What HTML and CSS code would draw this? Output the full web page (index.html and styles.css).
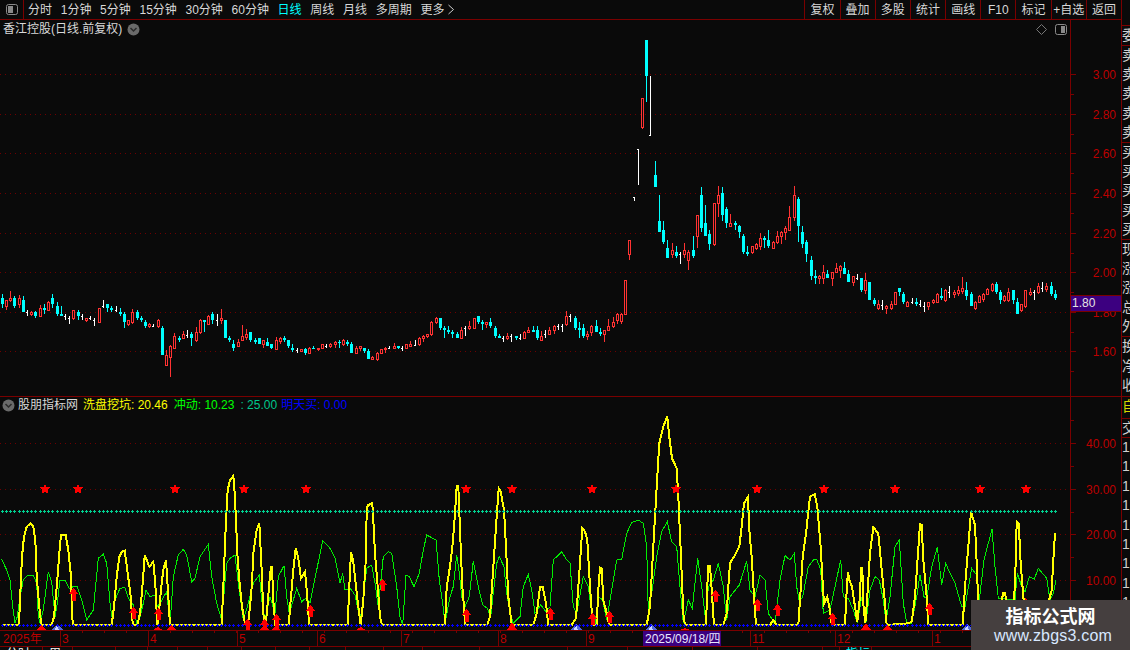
FILE: index.html
```html
<!DOCTYPE html>
<html lang="zh">
<head>
<meta charset="utf-8">
<title>香江控股</title>
<link rel="stylesheet" href="styles.css">
</head>
<body>
<div class="app">
  <div class="main">
    <div class="toolbar">
      <div class="tool-left">
        <div class="panel-btn">
          <svg class="panel-icon" width="14" height="13" viewBox="0 0 14 13"><rect class="pi-frame" x="1.5" y="1.5" width="11" height="10" rx="2"/><rect class="pi-fill" x="3" y="3" width="5" height="7"/></svg>
        </div>
        <div class="periods">
          <span>分时</span><span>1分钟</span><span>5分钟</span><span>15分钟</span><span>30分钟</span><span>60分钟</span><span class="active">日线</span><span>周线</span><span>月线</span><span>多周期</span>
          <span class="more">更多<svg class="more-icon" width="8" height="11" viewBox="0 0 8 11"><path d="M1.5 1l5 4.5-5 4.5"/></svg></span>
        </div>
      </div>
      <div class="tool-right">
        <span>复权</span><span>叠加</span><span>多股</span><span>统计</span><span>画线</span><span>F10</span><span>标记</span><span>+自选</span><span>返回</span>
      </div>
    </div>

    <div class="pane pane-price">
      <div class="plot">
        <svg id="priceChart" class="chart" viewBox="0 20 1070 376" width="1070" height="376"></svg>
        <div class="title-row">
          <span>香江控股(日线.前复权)</span>
          <svg class="chev" width="13" height="13" viewBox="0 0 13 13"><circle class="chev-bg" cx="6.5" cy="6.5" r="6"/><path class="chev-line" d="M3.5 5l3 3 3-3"/></svg>
        </div>
        <div class="pane-tools">
          <svg width="11" height="11" viewBox="0 0 11 11"><path class="diamond" d="M5.500 0.500l5 5-5 5-5-5z"/></svg>
          <svg width="14" height="13" viewBox="0 0 14 13"><rect class="pi-frame" x="1.500" y="1.500" width="11" height="10" rx="2"/><rect class="pi-fill" x="7" y="3" width="4" height="7"/></svg>
        </div>
      </div>
      <div class="axis">
        <svg id="priceAxis" class="chart" viewBox="1071 20 50 376" width="50" height="376"></svg>
        <div class="price-tag">1.80</div>
      </div>
    </div>

    <div class="pane pane-ind">
      <div class="plot">
        <svg id="indChart" class="chart" viewBox="0 397 1070 233" width="1070" height="233"></svg>
        <div class="legend">
          <svg class="chev" width="13" height="13" viewBox="0 0 13 13"><circle class="chev-bg" cx="6.5" cy="6.5" r="6"/><path class="chev-line" d="M3.500 5l3 3 3-3"/></svg>
          <span class="lg-name">股朋指标网</span>
          <span class="lg-yellow">洗盘挖坑: 20.46</span>
          <span class="lg-green">冲动: 10.23</span>
          <span class="lg-teal">: 25.00</span>
          <span class="lg-blue">明天买: 0.00</span>
        </div>
      </div>
      <div class="axis">
        <svg id="indAxis" class="chart" viewBox="1071 397 50 233" width="50" height="233"></svg>
      </div>
    </div>

    <div class="pane pane-x">
      <div class="plot">
        <svg id="xAxis" class="chart" viewBox="0 631 1070 15" width="1070" height="15"></svg>
      </div>
      <div class="axis"></div>
    </div>

    <div class="tabs">
      <span class="t43">分时</span><span class="t30">周</span><span class="t43"></span><span class="t32"></span><span class="t30"></span><span class="t30"></span><span class="t34"></span><span class="t34"></span><span class="t34"></span><span class="t36"></span><span class="t38"></span><span class="t39"></span><span class="t57"></span><span class="t88"></span><span class="t60"></span><span class="t65"></span><span class="t65"></span><span class="t65"></span><span class="t17"></span><span class="t32 tab-on">指标</span>
    </div>
  </div>

  <div class="side">
    <div class="grp g-top"></div>
    <div class="grp g-20"><div class="row">委比</div></div>
    <div class="grp g-97"><div class="row">卖五</div><div class="row">卖四</div><div class="row">卖三</div><div class="row">卖二</div><div class="row">卖一</div></div>
    <div class="grp g-97"><div class="row">买一</div><div class="row">买二</div><div class="row">买三</div><div class="row">买四</div><div class="row">买五</div></div>
    <div class="grp g-97"><div class="row">现价</div><div class="row">涨跌</div><div class="row">涨幅</div><div class="row">总量</div><div class="row">外盘</div></div>
    <div class="grp g-60"><div class="row">换手</div><div class="row">净资</div><div class="row">收益</div></div>
    <div class="grp g-22 side-yellow"><div class="row">自选</div></div>
    <div class="grp g-19"><div class="row">交易</div></div>
    <div class="list">
      <div class="row">1</div><div class="row">1</div><div class="row">1</div><div class="row">1</div><div class="row">1</div><div class="row">1</div><div class="row">1</div><div class="row">1</div><div class="row">1</div><div class="row">1</div><div class="row">1</div>
    </div>
  </div>

  <div class="watermark">
    <div class="wm-title">指标公式网</div>
    <div class="wm-url">www.zbgs3.com</div>
  </div>
</div>
<script src="chart.js"></script>
</body>
</html>
```

FILE: styles.css
```css
* { box-sizing: border-box; }
html, body { margin: 0; padding: 0; background: #0a0a0a; overflow: hidden; }
body {
  width: 1130px;
  height: 650px;
  font: 12px/14px "Liberation Sans", "Noto Sans CJK SC", sans-serif;
  color: #d8d8d8;
}
.app { position: relative; display: flex; width: 1130px; height: 650px; overflow: hidden; }
.main { display: flex; flex-direction: column; width: 1121px; flex: none; }

/* toolbar */
.toolbar {
  display: flex;
  justify-content: space-between;
  height: 20px;
  flex: none;
  border-bottom: 1px solid #7a0000;
}
.tool-left { display: flex; align-items: stretch; }
.panel-btn {
  display: flex;
  align-items: center;
  justify-content: center;
  width: 24px;
  border-right: 1px solid #7a0000;
}
.pi-frame { fill: none; stroke: #8a8a8a; }
.pi-fill { fill: #8a8a8a; }
.periods { display: flex; align-items: center; gap: 8.7px; padding-left: 4px; }
.periods .active { color: #00ffff; }
.more { display: inline-flex; align-items: center; gap: 3px; }
.more-icon path { fill: none; stroke: #d0d0d0; }
.tool-right { display: flex; }
.tool-right span {
  display: flex;
  align-items: center;
  justify-content: center;
  width: 35.2px;
  border-left: 1px solid #7a0000;
  white-space: nowrap;
}

/* panes */
.pane { display: flex; flex: none; }
.pane-price { height: 377px; border-bottom: 1px solid #7a0000; }
.pane-ind { height: 234px; border-bottom: 1px solid #7a0000; }
.pane-x { height: 16px; border-bottom: 1px solid #7a0000; }
.plot { position: relative; width: 1070px; flex: none; }
.axis { position: relative; width: 51px; flex: none; border-left: 1px solid #7a0000; }
.chart { display: block; shape-rendering: crispEdges; }

.title-row {
  position: absolute;
  left: 3px;
  top: 2px;
  display: flex;
  align-items: center;
  gap: 5px;
  height: 14px;
}
.chev { flex: none; }
.chev-bg { fill: #6a6a6a; }
.chev-line { fill: none; stroke: #2a2a2a; stroke-width: 1.5; }
.pane-tools {
  position: absolute;
  right: 2px;
  top: 3px;
  display: flex;
  align-items: center;
  gap: 7px;
}
.diamond { fill: none; stroke: #777; }

.price-tag {
  position: absolute;
  left: 0;
  top: 275px;
  width: 50px;
  height: 17px;
  padding-left: 1px;
  background: #3c0080;
  border-top: 1px solid #7a0000;
  border-bottom: 1px solid #7a0000;
  color: #e4e4e4;
  line-height: 15px;
}

.legend {
  position: absolute;
  left: 2px;
  top: 1px;
  display: flex;
  align-items: center;
  height: 14px;
  white-space: nowrap;
}
.lg-name { margin-left: 3px; color: #d8d8d8; }
.lg-yellow { margin-left: 5px; color: #ffff00; }
.lg-green { margin-left: 6px; color: #00ff00; }
.lg-teal { margin-left: 6px; color: #00c88c; }
.lg-blue { margin-left: 4px; color: #0000ff; }

/* svg chart parts */
.grid { stroke: #6e0000; stroke-dasharray: 1 4; fill: none; }
.red-c { fill: none; stroke: #ff3232; }
.red-w { stroke: #ff3232; }
.cy-b { fill: #00ffff; }
.cy-w { stroke: #00ffff; }
.wh-w { stroke: #ffffff; }
.ln-yellow { fill: none; stroke: #ffff00; stroke-width: 2; }
.ln-green { fill: none; stroke: #00ee00; stroke-width: 1; }
.pl-teal { fill: none; stroke: #00d090; }
.pl-blue { fill: none; stroke: #0000ff; }
.mk-red { fill: #ff0000; }
.mk-blue { fill: #5068d8; }
.mk-tip { fill: #c8d4ff; }
.tick { stroke: #7a0000; }
.ax-t { fill: #bc0000; font: 12px "Liberation Sans", sans-serif; }
.x-t { fill: #bc0000; font: 12px "Liberation Sans", "Noto Sans CJK SC", sans-serif; }
.date-bg { fill: #3c0080; }
.date-t { fill: #e8e8ff; font: 12px "Liberation Sans", "Noto Sans CJK SC", sans-serif; }

/* bottom tabs */
.tabs { display: flex; height: 3px; overflow: hidden; flex: none; line-height: 12px; }
.tabs span { flex: none; height: 14px; padding: 1px 0 0 6px; border-right: 1px solid #7a0000; color: #fff; }
.tabs .tab-on { color: #00ffff; }
.t17 { width: 17px; }
.t30 { width: 30px; }
.t32 { width: 32px; }
.t34 { width: 34px; }
.t36 { width: 36px; }
.t38 { width: 38px; }
.t39 { width: 39px; }
.t43 { width: 43px; }
.t57 { width: 57px; }
.t60 { width: 60px; }
.t65 { width: 65px; }
.t88 { width: 88px; }

/* side column */
.side {
  width: 9px;
  flex: none;
  border-left: 1px solid #7a0000;
  overflow: hidden;
  font-size: 14px;
  color: #d0d0d0;
}
.grp { display: flex; flex-direction: column; border-bottom: 1px solid #7a0000; }
.row { flex: 1; width: 40px; white-space: nowrap; line-height: 19px; }
.g-top { height: 26px; }
.g-20 { height: 20px; }
.g-97 { height: 97px; }
.g-60 { height: 60px; }
.g-22 { height: 22px; }
.g-19 { height: 19px; }
.side-yellow { color: #d8d800; }
.list .row { height: 19.4px; flex: none; }

/* watermark */
.watermark {
  position: absolute;
  left: 971px;
  top: 600px;
  width: 159px;
  height: 50px;
  background: #453f3f;
  text-align: center;
}
.wm-title { margin-top: 5px; color: #fff; font: bold 18px/20px "Noto Sans CJK SC", sans-serif; }
.wm-url { margin-top: 1px; padding-left: 5px; color: #d8e8ff; font: 16px/20px "Liberation Sans", sans-serif; letter-spacing: .2px; }
```

FILE: chart.js
```js
// Daily bars: type, high, body top, body bottom, low (pixel rows of the price pane).
var BARS = "c294 298 304 308,r300 300 307 310,r291 298 301 302,c296 298 306 308,r295 298 305 308,c296 300 312 312,w310 312 312 316,r311 312 315 316,c311 312 316 318,r305 308 317 317,c304 308 310 314,r301 302 311 311,c294 298 304 308,c302 306 314 316,c306 314 316 316,w314 316 316 320,w316 318 318 324,r310 310 319 320,c310 312 316 320,w314 316 316 320,r318 318 321 322,w316 318 318 320,w318 320 320 326,r308 308 323 323,w300 306 306 308,c304 304 308 312,c306 308 310 312,w306 310 310 312,c308 312 314 316,c312 314 322 328,r320 320 325 326,r309 312 323 324,c310 312 318 320,c316 318 320 322,c320 322 326 328,r323 324 327 328,w324 326 326 327,r319 320 327 328,c326 328 355 355,r350 355 366 366,r345 346 358 377,r333 336 349 349,c336 338 340 342,r331 334 339 339,w330 335 335 338,c332 334 338 346,r327 332 341 342,r319 320 333 334,c320 320 322 332,r315 316 325 325,c312 314 320 324,w314 320 320 326,r309 318 321 324,c320 320 338 338,c336 338 340 342,c340 344 348 351,r339 342 347 347,r325 336 341 341,r329 334 338 340,c332 332 340 342,c338 340 342 344,c338 338 344 344,r340 340 345 348,c338 342 346 346,c344 344 348 349,r337 340 350 350,r337 338 342 344,c336 338 340 342,c340 340 346 348,c344 348 350 352,w348 350 350 353,r349 349 352 352,c348 349 353 355,r347 348 354 354,c346 348 349 349,r348 348 350 351,"
+ "r344 344 349 349,w344 346 346 348,r343 344 347 348,r341 342 345 348,c340 342 343 348,r339 340 345 346,c340 342 344 346,c342 344 353 353,r346 348 354 354,r346 346 349 351,c348 348 351 353,c349 351 359 359,r356 357 360 360,r352 353 360 361,r349 349 354 354,r347 348 350 353,w346 348 348 349,r343 346 349 349,c346 346 348 349,w346 348 348 351,r344 344 349 349,r341 344 347 347,w340 345 345 346,r337 338 345 346,r335 336 339 342,r334 334 337 338,r321 322 335 336,r317 318 323 324,c318 318 328 330,c326 328 330 338,c326 330 332 334,c330 332 334 338,c332 334 338 338,r327 330 339 339,w326 328 328 336,r321 326 329 330,r318 318 329 329,c316 316 322 324,c320 322 324 330,r322 322 325 328,c318 322 326 328,c326 328 336 338,c334 336 338 338,w336 338 338 342,r333 336 339 340,w334 336 336 342,c336 336 338 340,w334 338 338 340,r331 332 339 339,r327 330 333 333,c326 330 332 332,c326 330 338 340,r331 336 341 341,w330 334 334 338,r327 330 335 335,r325 326 331 334,w324 326 326 330,w324 326 326 332,r311 316 325 326,w314 316 316 322,c316 318 328 330,c322 328 330 338,c324 328 336 338,r331 334 337 340,r325 326 333 336,c320 326 332 332,c328 332 334 336,r330 330 335 342,r319 326 331 331,r317 322 327 328,r313 314 321 324,"
+ "r313 314 322 324,r280 280 315 315,r240 240 255 260,w197 197 197 201,w149 149 149 185,r98 98 128 129,c40 40 76 102,w76 135 135 135,c161 175 187 187,c195 221 232 232,c221 230 242 244,c240 248 258 258,r243 250 255 258,c246 252 256 258,w252 254 254 264,r243 250 255 258,r250 252 261 270,c236 250 256 258,r215 215 237 248,c187 195 228 232,c205 223 236 236,c230 234 244 250,r203 203 245 246,r186 195 204 217,c187 193 215 221,c207 209 223 228,r214 223 227 227,c221 223 225 230,c225 226 232 238,c234 236 252 254,c246 252 254 256,r246 246 253 254,r243 244 249 250,r233 238 247 250,c236 238 240 248,c230 240 246 248,r241 242 249 249,r231 236 243 244,r231 232 237 244,r226 228 233 240,r206 217 231 231,r186 195 218 221,c197 199 226 242,c226 232 244 248,c240 242 254 262,c256 260 276 280,c270 276 278 284,r275 276 279 284,r265 272 279 284,c270 274 278 278,r272 272 279 286,r263 268 273 273,r265 266 271 278,c262 268 274 274,c270 274 282 282,r276 276 283 286,w274 278 278 280,"
+ "c278 278 290 292,r273 280 291 294,c282 282 300 300,c298 300 304 306,r300 304 309 310,w300 305 305 310,r305 306 309 314,r301 304 309 310,r292 292 305 305,c288 288 292 296,c292 294 302 304,r301 302 307 307,w298 302 302 304,c298 302 304 306,w300 304 304 307,w302 306 306 312,r302 302 307 310,r299 300 303 304,r293 294 303 303,c288 296 298 300,r289 290 301 302,w286 292 292 298,r290 292 295 298,r286 290 294 296,r277 288 292 294,c282 290 296 300,c292 294 306 306,r301 302 309 310,r295 296 303 303,r293 294 300 302,r288 289 295 295,r283 284 291 292,c282 284 292 294,c290 292 300 304,r295 296 301 302,r288 292 301 302,c290 290 300 304,c298 302 314 314,r304 304 311 312,r290 290 307 308,r288 292 295 296,w290 292 292 300,r283 286 293 294,w282 288 288 292,r283 286 290 292,c282 286 294 296,c290 294 298 300";

// Indicator lines traced in three overlapping sections: [x origin, y origin, "x,y ..." at 1/3 px].
var YELLOW = [
  [0, 520, "5,315 57,315 60,240 66,110 72,50 80,20 92,10 100,20 106,60 110,170 118,260 124,315 155,315 162,290 172,180 178,100 183,45 197,45 205,90 212,160 218,315 335,315 342,260 350,170 358,110 366,95 374,92 382,150 392,230 397,300 400,315 412,315 420,280 428,190 434,105 442,125 448,140 460,125 466,190 472,315 475,300 484,200 490,150 498,120 503,200 510,315 665,315 672,150 678,0 683,-90 690,-120 700,-132 704,-81 708,0 712,100 718,180 726,260 735,310 745,305 750,260 756,190 760,100 770,30 778,10 785,150 790,280 794,315 800,285 808,190 813,140 816,140 820,240 826,315 866,315 872,240 880,150 887,85 895,115 903,175 915,155 920,210 928,315 1043,315 1048,200 1053,97 1060,125 1068,200 1075,260 1082,315 1090,240 1098,110 1100,-36 1105,-45 1117,-51 1120,0 1125,100 1133,200 1140,290 1146,315 1200,315"],
  [400, 400, "135,675 140,560 150,500 158,430 165,340 170,257 175,257 180,390 187,560 192,620 195,675 262,675 270,650 280,500 290,350 296,265 302,275 312,330 318,440 325,590 335,675 400,675 410,640 420,560 428,560 438,610 445,675 515,675 528,655 538,520 547,385 555,395 562,420 570,560 578,675 590,675 595,570 600,503 605,505 610,600 620,640 628,675 740,675 750,620 760,440 770,260 778,130 790,80 802,50 808,110 816,175 830,205 835,290 842,450 850,640 855,675 918,675 922,560 925,497 930,497 935,570 942,675 970,675 980,640 985,560 990,490 1005,465 1018,440 1025,380 1032,310 1044,290 1048,390 1055,470 1062,590 1068,675 1110,675 1120,660 1130,675 1140,675"],
  [780, 390, "55,705 60,630 68,500 78,430 90,320 104,312 112,350 122,470 128,580 132,640 142,620 150,660 155,705 195,705 200,600 204,545 208,570 216,590 225,650 232,695 240,620 243,533 247,533 250,640 256,700 262,620 270,490 280,412 295,430 305,540 315,640 320,705 385,700 395,695 405,620 412,520 420,403 425,405 430,510 440,620 445,705 548,705 555,590 565,470 573,365 585,405 590,520 595,640 600,705 655,705 665,630 670,610 675,610 680,640 700,640 705,590 710,395 716,400 722,520 730,620 740,705 800,705 805,640 815,600 820,510 825,428"]
];
var GREEN = [
  [0, 520, "5,118 20,150 30,180 38,260 45,310 52,290 60,230 70,180 85,165 100,165 110,190 115,290 120,310 130,270 145,155 155,185 165,290 172,250 180,180 195,180 208,205 220,200 232,200 245,240 260,300 280,270 295,115 310,103 320,130 330,250 335,290 345,240 360,205 375,203 385,235 400,255 410,310 420,290 430,250 438,210 450,230 465,225 470,260 480,250 500,215 510,315 520,170 535,105 550,88 560,105 575,185 585,175 600,110 625,73 635,170 650,250 665,300 680,130 690,115 705,105 715,190 730,300 745,250 760,190 778,165 785,240 795,300 810,230 825,280 835,170 852,137 860,230 868,280 880,240 890,205 905,245 920,232 930,250 950,150 968,62 990,85 1005,115 1020,190 1028,160 1035,210 1050,205 1065,225 1080,300 1085,270 1100,145 1115,135 1125,190 1135,260 1150,110 1165,95 1175,100 1190,200"],
  [400, 400, "0,650 8,675 18,525 28,530 42,560 58,520 70,450 80,405 108,420 118,540 128,610 135,670 150,590 160,560 170,465 178,520 185,590 195,620 208,590 220,483 235,560 248,615 262,625 272,650 278,595 290,490 298,470 312,500 320,580 330,640 340,670 360,650 370,560 385,523 395,570 405,640 422,615 438,635 450,620 460,480 485,455 500,480 510,490 520,620 530,640 550,530 565,560 575,640 585,675 595,590 608,600 620,660 630,600 650,480 665,478 680,400 695,368 715,360 730,370 740,440 745,640 755,580 770,470 785,395 802,365 815,425 830,440 840,560 850,670 865,600 877,625 893,475 905,560 918,670 925,560 940,540 955,490 970,560 980,660 990,590 1018,555 1040,483 1050,570 1065,590 1080,525 1095,540 1105,640 1125,672"],
  [780, 390, "0,570 15,497 30,510 43,490 50,590 58,635 68,620 85,530 100,510 110,507 122,540 130,670 150,660 165,590 182,510 190,620 205,625 220,660 232,700 245,620 258,695 270,600 285,560 298,570 310,630 318,695 330,620 345,470 358,450 370,640 380,700 395,700 410,620 420,555 432,620 440,625 455,530 472,472 485,585 497,520 510,550 525,580 545,650 555,650 575,535 590,555 598,630 612,510 636,417 645,530 655,625 705,630 712,550 725,590 735,605 748,560 763,567 775,535 800,565 810,630 820,610 828,570"]
];
var STARS = [45, 78, 175, 244, 306, 466, 512, 592, 676, 757, 824, 895, 980, 1026];
// Arrows: x, top, bottom.
var ARROWS = [[73,588,601],[133,607,619],[158,608,620],[247,619,631],[264,619,631],[276,614,631],[310,605,617],[382,579,591],[466,609,622],[550,608,620],[592,613,625],[609,611,623],[715,590,602],[757,599,611],[777,604,616],[832,613,625],[929,603,615]];
var RED_TRI = [[41,625],[158,627],[171,625],[264,625],[276,626],[361,627],[512,622],[685,628],[866,623],[887,625],[1026,595]];
var BLUE_TRI = [57, 576, 651, 967];

function barX(i) { return Math.floor(2.3 + 4.212 * i); }

function drawBars() {
  var out = '';
  BARS.split(',').forEach(function (s, i) {
    var t = s[0], v = s.slice(1).split(' ').map(Number), x = barX(i);
    var hi = v[0], top = v[1], bot = v[2], lo = v[3];
    if (t === 'c') {
      out += '<line class="cy-w" x1="' + (x + .5) + '" x2="' + (x + .5) + '" y1="' + hi + '" y2="' + lo + '"/>';
      out += '<rect class="cy-b" x="' + (x - 1) + '" y="' + top + '" width="3" height="' + (bot - top) + '"/>';
    } else if (t === 'r') {
      if (top > hi) out += '<line class="red-w" x1="' + (x + .5) + '" x2="' + (x + .5) + '" y1="' + hi + '" y2="' + top + '"/>';
      if (lo > bot) out += '<line class="red-w" x1="' + (x + .5) + '" x2="' + (x + .5) + '" y1="' + bot + '" y2="' + lo + '"/>';
      out += '<rect class="red-c" x="' + (x - .5) + '" y="' + (top + .5) + '" width="2" height="' + (bot - top - 1) + '"/>';
    } else {
      out += '<line class="wh-w" x1="' + (x + .5) + '" x2="' + (x + .5) + '" y1="' + hi + '" y2="' + lo + '"/>';
      out += '<line class="wh-w" x1="' + (x - 1) + '" x2="' + (x + 1) + '" y1="' + (top + .5) + '" y2="' + (top + .5) + '"/>';
    }
  });
  return out;
}

function gridLines(ys) {
  return ys.map(function (y) {
    return '<line class="grid" x1="0" x2="1067" y1="' + (y + .5) + '" y2="' + (y + .5) + '"/>';
  }).join('');
}

function trace(sections) {
  var pts = [];
  sections.forEach(function (sec) {
    sec[2].split(' ').forEach(function (p) {
      var a = p.split(',');
      pts.push((sec[0] + a[0] / 3).toFixed(1) + ',' + (sec[1] + a[1] / 3).toFixed(1));
    });
  });
  return pts.join(' ');
}

function plusRow(cls, y, size) {
  var d = '';
  for (var i = 0; i <= 250; i++) {
    var x = barX(i) + .5;
    d += 'M' + (x - size) + ' ' + (y + .5) + 'h' + (size * 2) + 'M' + x + ' ' + (y + .5 - size) + 'v' + (size * 2);
  }
  return '<path class="' + cls + '" d="' + d + '"/>';
}

function star(cx, cy, R) {
  var p = [];
  for (var i = 0; i < 10; i++) {
    var r = i % 2 ? R * .5 : R, a = -Math.PI / 2 + i * Math.PI / 5;
    p.push((cx + r * Math.cos(a)).toFixed(1) + ',' + (cy + r * Math.sin(a)).toFixed(1));
  }
  return '<polygon class="mk-red" points="' + p.join(' ') + '"/>';
}

function arrow(a) {
  var x = a[0] + .5, t = a[1], b = a[2];
  return '<polygon class="mk-red" points="' + [x, t, x + 5, t + 6, x + 2, t + 6, x + 2, b, x - 2, b, x - 2, t + 6, x - 5, t + 6].join(',') + '"/>';
}

function tri(cls, x, top, w) {
  return '<polygon class="' + cls + '" points="' + x + ',' + top + ' ' + (x + w) + ',630 ' + (x - w) + ',630"/>';
}

function drawIndicator() {
  var out = gridLines([443, 489, 534, 580]);
  out += '<polyline class="ln-green" points="' + trace(GREEN) + '"/>';
  out += '<polyline class="ln-yellow" points="' + trace(YELLOW) + '"/>';
  out += plusRow('pl-teal', 511, 1.5);
  BLUE_TRI.forEach(function (x) { out += tri('mk-blue', x, 624, 6) + tri('mk-tip', x, 624, 2); });
  out += plusRow('pl-blue', 625, 1.5);
  STARS.forEach(function (x) { out += star(x, 489, 5.5); });
  RED_TRI.forEach(function (t) { out += tri('mk-red', t[0], t[1], 5); });
  ARROWS.forEach(function (a) { out += arrow(a); });
  return out;
}

function axisMarks(labels, minors) {
  var out = '';
  labels.forEach(function (l) {
    out += '<line class="tick" x1="1071" x2="1076" y1="' + (l[1] + .5) + '" y2="' + (l[1] + .5) + '"/>';
    out += '<text class="ax-t" x="1116" y="' + (l[1] + 5) + '" text-anchor="end">' + l[0] + '</text>';
  });
  minors.forEach(function (y) {
    out += '<line class="tick" x1="1071" x2="1074" y1="' + (y + .5) + '" y2="' + (y + .5) + '"/>';
  });
  return out;
}

function drawXAxis() {
  var out = '<text class="x-t" x="3" y="643">2025年</text>';
  for (var x = 82; x < 1070; x += 22) {
    out += '<line class="tick" x1="' + (x + .5) + '" x2="' + (x + .5) + '" y1="631" y2="633"/>';
  }
  [[60, '3'], [148, '4'], [237, '5'], [317, '6'], [401, '7'], [498, '8'], [586, '9'], [750, '11'], [835, '12'], [932, '1']].forEach(function (m) {
    out += '<line class="tick" x1="' + (m[0] + .5) + '" x2="' + (m[0] + .5) + '" y1="631" y2="646"/>';
    out += '<text class="x-t" x="' + (m[0] + 2) + '" y="643">' + m[1] + '</text>';
  });
  out += '<rect class="date-bg" x="643" y="631" width="78" height="15"/>';
  out += '<text class="date-t" x="645" y="643">2025/09/18/四</text>';
  return out;
}

document.getElementById('priceChart').innerHTML = gridLines([74, 114, 153, 193, 233, 272, 312, 351]) + drawBars();
document.getElementById('priceAxis').innerHTML = axisMarks(
  [['3.00', 74], ['2.80', 114], ['2.60', 153], ['2.40', 193], ['2.20', 233], ['2.00', 272], ['1.80', 312], ['1.60', 351]],
  [94, 134, 173, 213, 253, 292, 332, 371]
);
document.getElementById('indChart').innerHTML = drawIndicator();
document.getElementById('indAxis').innerHTML = axisMarks(
  [['40.00', 443], ['30.00', 489], ['20.00', 534], ['10.00', 580]],
  [420, 466, 512, 557, 603]
);
document.getElementById('xAxis').innerHTML = drawXAxis();
```
